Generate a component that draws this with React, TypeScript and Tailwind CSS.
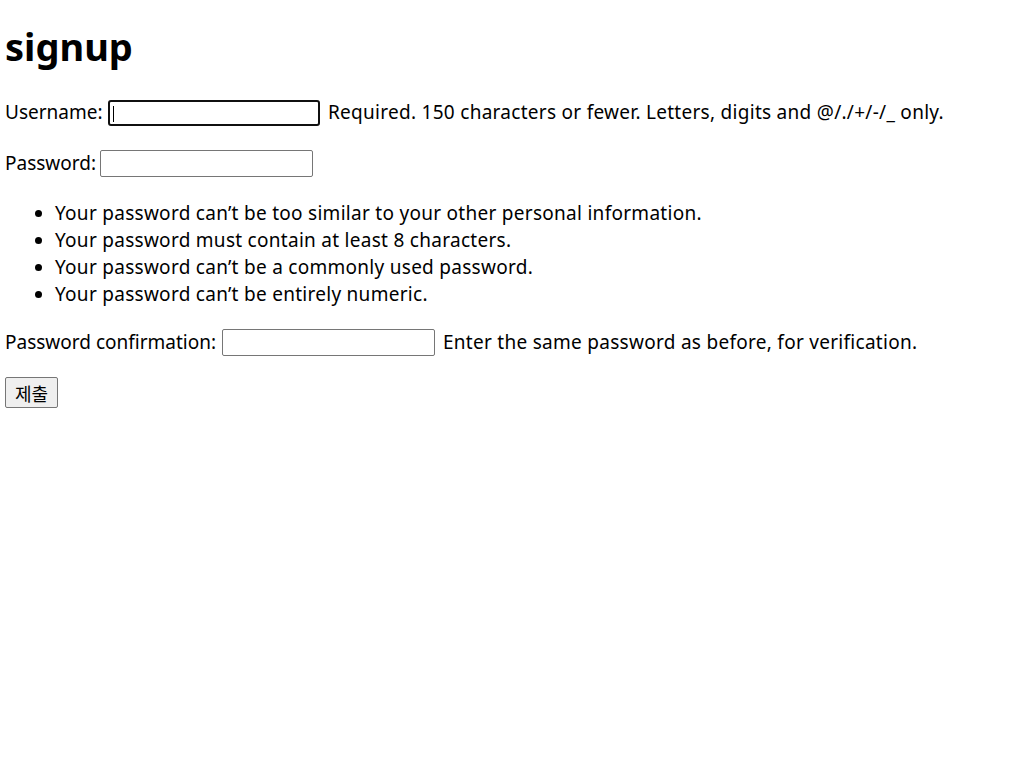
import React from "react";

const font = { fontFamily: '"Noto Sans", "Noto Sans CJK KR", sans-serif' };

function Field({ label, labelW, focused, help }: { label: string; labelW: string; focused?: boolean; help?: string }) {
  return (
    <div className="flex items-center h-[27px] whitespace-nowrap">
      <span className={`${labelW} shrink-0 tracking-normal`}>{label}</span>
      {focused ? (
        <div className="relative w-[212px] h-[26px] border-2 border-[#101010] rounded-[3px] bg-white shrink-0">
          <span className="absolute left-[3px] top-[4px] w-px h-[16px] bg-black" />
        </div>
      ) : (
        <input type="text" className="w-[213px] h-[27px] border border-[#767676] rounded-[2px] bg-white shrink-0 outline-none" />
      )}
      {help && <span className="ml-[8px]">{help}</span>}
    </div>
  );
}

export default function App() {
  return (
    <div className="bg-white min-h-[765px] pl-[5px] text-black text-[19px] tracking-[0.28px]" style={font}>
      <div className="h-[99px] pt-[19px]">
        <h1 className="text-[38px] font-bold leading-[54px] tracking-normal">signup</h1>
      </div>
      <Field label="Username:" labelW="w-[103px]" focused help="Required. 150 characters or fewer. Letters, digits and @/./+/-/_ only." />
      <div className="mt-[24px]">
        <Field label="Password:" labelW="w-[95px]" />
      </div>
      <ul className="mt-[23px] list-disc pl-[50px] leading-[27px]">
        <li>Your password can’t be too similar to your other personal information.</li>
        <li>Your password must contain at least 8 characters.</li>
        <li>Your password can’t be a commonly used password.</li>
        <li>Your password can’t be entirely numeric.</li>
      </ul>
      <div className="mt-[21px]">
        <Field label="Password confirmation:" labelW="w-[217px]" help="Enter the same password as before, for verification." />
      </div>
      <div className="mt-[21px]">
        <button className="w-[53px] h-[31px] bg-[#efefef] border border-[#767676] rounded-[2px] text-[18px] leading-none flex items-center justify-center tracking-normal" style={{ fontFamily: '"Noto Sans CJK KR", sans-serif' }}>
          제출
        </button>
      </div>
    </div>
  );
}
